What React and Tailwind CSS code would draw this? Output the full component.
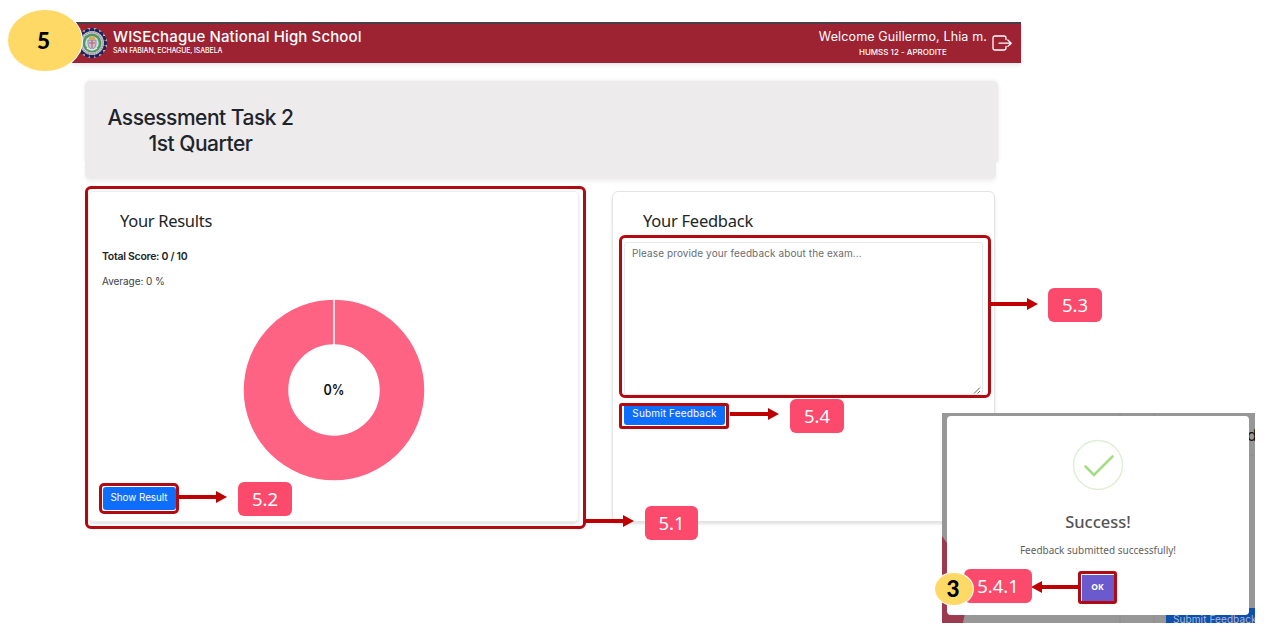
function Seal() {
  const scallops = Array.from({ length: 16 }, (_, i) => (i * Math.PI) / 8);
  return (
    <svg viewBox="0 0 32 32" className="h-8 w-8 shrink-0">
      <circle cx="16" cy="16" r="15" fill="#d9d4e2" />
      {scallops.map((a, i) => (
        <circle key={i} cx={16 + 12.7 * Math.cos(a)} cy={16 + 12.7 * Math.sin(a)} r="2.5" fill="#1d2458" />
      ))}
      <circle cx="16" cy="16" r="12" fill="#c3ccd6" />
      <circle cx="16" cy="16" r="10.8" fill="none" stroke="#b98a94" strokeWidth="1.4" strokeDasharray="1.5 1" />
      <circle cx="16" cy="16" r="9.4" fill="#4f9a63" />
      <circle cx="16" cy="16" r="6.8" fill="#d5dcd8" />
      <path d="M12 13h8v4q0 4-4 5.500-4-1.500-4-5.500z" fill="#cdbfd0" stroke="#6c87ad" strokeWidth=".8" />
      <path d="M16 13v8M13 16h6" stroke="#c0545c" strokeWidth="1" />
      <path d="M13 12.500 13.500 9l2.500 1.500L18.500 9l.5 3.500z" fill="#e3a43b" />
      <path d="M11 21q5 4 10 0" stroke="#eef1ea" strokeWidth="1.300" fill="none" />
    </svg>
  );
}

function LogoutIcon() {
  return (
    <svg viewBox="0 0 22 18" className="h-[18px] w-[22px]" fill="none" stroke="#fff" strokeWidth="1.300" strokeLinecap="round" strokeLinejoin="round">
      <path d="M15 5.500V4q0-2-2-2H4Q2 2 2 4v10q0 2 2 2h9q2 0 2-2v-1.500" />
      <path d="M8 9.200h12M16.800 6l3.400 3.200-3.400 3.200" />
    </svg>
  );
}

function Arrow({ className, length, left = false }) {
  const body = length - 11;
  return (
    <svg className={className} width={length} height="12" viewBox={`0 0 ${length} 12`}>
      <g fill="#bf0000" transform={left ? `translate(${length} 0) scale(-1 1)` : undefined}>
        <rect x="0" y="4" width={body + 1} height="4" />
        <path d={`M${body} 0L${length} 6L${body} 12z`} />
      </g>
    </svg>
  );
}

function Callout({ className, children }) {
  return (
    <div
      className={`absolute flex h-[34px] items-center justify-center rounded-[6px] bg-[#fb4a6c] pt-px font-['Noto_Sans',sans-serif] text-[18.5px] leading-none text-white ${className}`}
    >
      {children}
    </div>
  );
}

function Header() {
  return (
    <header className="ml-[72px] flex h-[41px] w-[949px] items-center border-t-2 border-[#454045] bg-[#9d2232] pl-1 text-white shadow-[0_2px_4px_rgba(0,0,0,0.1)]">
      <div className="mb-[2px]">
        <Seal />
      </div>
      <div className="mb-[2px] ml-[5px] flex flex-col">
        <span className="whitespace-nowrap text-[15px] font-medium leading-[17px] tracking-[0.12px]">WISEchague National High School</span>
        <span className="whitespace-nowrap text-[7px] font-medium leading-[12px] tracking-[-0.12px]">SAN FABIAN, ECHAGUE, ISABELA</span>
      </div>
      <div className="mb-[2px] ml-auto flex flex-col items-center">
        <span className="whitespace-nowrap text-[12.5px] leading-[18px] tracking-[0.14px]">Welcome Guillermo, Lhia m.</span>
        <span className="whitespace-nowrap text-[8px] font-medium leading-[12px]">HUMSS 12 - APRODITE</span>
      </div>
      <div className="mb-[2px] ml-[4px] mr-2">
        <LogoutIcon />
      </div>
    </header>
  );
}

function TitlePanel() {
  return (
    <div className="ml-[85px] mt-[18px] w-[913px]">
      <div className="h-[81px] rounded-t-[5px] bg-[#edebec] pl-[22px] pt-[24px] shadow-[0_0_4px_rgba(0,0,0,0.1)]">
        <h1 className="w-[187px] text-center text-[21px] font-medium leading-[26px] tracking-[-0.5px] text-[#20242a]">
          <span className="whitespace-nowrap">Assessment Task 2</span>
          <br />
          1st Quarter
        </h1>
      </div>
      <div className="relative h-[17px] w-[911px] rounded-b-[5px] bg-[#edebec] shadow-[0_3px_4px_rgba(0,0,0,0.06)]" />
    </div>
  );
}

function Donut() {
  return (
    <svg viewBox="0 0 182 182" className="ml-[140.500px] mt-[10px] h-[182px] w-[182px]">
      <circle cx="91" cy="91" r="68" fill="none" stroke="#ff6384" strokeWidth="44.500" />
      <path d="M91 0v46" stroke="#fff" strokeWidth="1.500" />
      <text x="91" y="96" textAnchor="middle" fontSize="14" fontWeight="600" fill="#111" fontFamily="Inter, sans-serif" textLength="21" lengthAdjust="spacingAndGlyphs">
        0%
      </text>
    </svg>
  );
}

function ResultsCard() {
  return (
    <section className="h-[343px] w-[501px] rounded-[6px] border-[3px] border-[#b10a10] pt-[2px]">
      <div className="h-[331px] w-[491px] rounded-[5px] border border-[#ededed] pl-[13px] shadow-[0_2px_3px_rgba(0,0,0,0.12)]">
        <h2 className="ml-[18px] mt-[16px] font-['Noto_Sans',sans-serif] text-[16.5px] leading-[26px] tracking-[-0.3px] text-[#212529]">Your Results</h2>
        <p className="mt-[15px] text-[10.5px] font-semibold leading-4 tracking-[-0.28px] text-[#212529]">Total Score: 0 / 10</p>
        <p className="mt-[8px] text-[10px] leading-4 tracking-[-0.05px] text-[#3c4045]">Average: 0 %</p>
        <Donut />
        <div className="ml-[-3px] mt-[2px] flex h-[31px] w-20 items-center justify-center rounded-[5px] border-[3px] border-[#b10a10] bg-white">
          <button className="h-[23px] w-[73px] whitespace-nowrap rounded-[3px] bg-[#0d6efd] text-[9.8px] text-white">Show Result</button>
        </div>
      </div>
    </section>
  );
}

function FeedbackCard() {
  return (
    <section className="ml-[26px] mt-[5px] h-[331px] w-[383px] rounded-[6px] border border-[#e3e4e6] pl-[6px] shadow-[0_2px_3px_rgba(0,0,0,0.12)]">
      <h2 className="ml-[24px] mt-[16px] font-['Noto_Sans',sans-serif] text-[16.5px] leading-[26px] tracking-[-0.25px] text-[#212529]">Your Feedback</h2>
      <div className="mt-[1px] h-[163px] w-[372px] rounded-[6px] border-[3px] border-[#b10a10] px-[2px] pt-[4px]">
        <div className="flex h-[153px] w-[359px] justify-between rounded-[3px] border border-[#e6eaed] pl-[7px] pt-[2px]">
          <p className="whitespace-nowrap text-[10px] leading-4 tracking-[0.1px] text-[#6a6d70]">Please provide your feedback about the exam...</p>
          <svg viewBox="0 0 8 8" className="mr-px h-2 w-2 self-end" stroke="#555" strokeWidth=".9">
            <path d="M1 7.500 7 1.500M4.500 7.500 7 5" />
          </svg>
        </div>
      </div>
      <div className="mt-[5px] h-[26px] w-[110px] rounded-[3px] border-[3px] border-[#b10a10] pl-[2px]">
        <button className="flex h-[19px] w-[101px] justify-center whitespace-nowrap rounded-b-[3px] bg-[#0d6efd] text-[10px] leading-[14px] tracking-[0.15px] text-white">Submit Feedback</button>
      </div>
    </section>
  );
}

function SuccessModal() {
  return (
    <div className="absolute left-[942px] top-[413px] h-[210px] w-[313px] overflow-hidden bg-[#979797]">
      <svg className="absolute inset-0" width="313" height="210">
        <path d="M0 123 5 130V199Q14 205 23 200L21 210H0z" fill="#9c3a50" />
        <path d="M178 0v210M212 0v210M300 42h13" stroke="#8d8d8d" strokeWidth="1" />
      </svg>
      <span className="absolute left-[305px] top-[12px] text-[16px] leading-5 text-[#111]">d</span>
      <span className="absolute left-[224px] top-[195px] h-4 w-[90px] whitespace-nowrap bg-[#0f4fae] pl-[7px] pt-[4px] text-[10px] leading-[15px] tracking-[0.1px] text-[#a9bad2]">Submit Feedback</span>
      <div className="absolute left-[5px] top-[3px] flex h-[199px] w-[302px] flex-col items-center rounded-[4px] bg-white pt-[23px] font-['Noto_Sans',sans-serif]">
        <svg viewBox="0 0 52 52" className="h-[52px] w-[52px] shrink-0" fill="none">
          <circle cx="26" cy="26" r="24.500" stroke="#dfefd5" strokeWidth="1.500" />
          <path d="M13.500 27.500 22 36 40.500 17.500" stroke="#a5dc86" strokeWidth="2.600" strokeLinecap="round" />
        </svg>
        <h3 className="mt-[19px] text-[16.5px] font-medium leading-6 text-[#545454]">Success!</h3>
        <p className="mt-[8px] whitespace-nowrap text-[10px] leading-4 text-[#5f5f5f]">Feedback submitted successfully!</p>
        <div className="mr-px mt-[13px] flex h-[33px] w-[39px] items-center justify-center rounded-[3px] border-[3px] border-[#b10a10]">
          <button className="h-[26px] w-8 bg-[#6a5acd] text-[8.5px] font-bold text-white">OK</button>
        </div>
      </div>
    </div>
  );
}

export default function App() {
  return (
    <div className="relative h-[644px] w-[1280px] overflow-hidden bg-white pt-[22px] font-['Inter',sans-serif]">
      <Header />
      <TitlePanel />
      <main className="ml-[85px] mt-[7px] flex items-start">
        <ResultsCard />
        <FeedbackCard />
      </main>

      <SuccessModal />

      <Arrow className="absolute left-[178px] top-[491px]" length={49} />
      <Arrow className="absolute left-[585px] top-[515px]" length={49} />
      <Arrow className="absolute left-[990px] top-[298px]" length={48} />
      <Arrow className="absolute left-[730px] top-[408px]" length={49} />
      <Arrow className="absolute left-[1031px] top-[581px]" length={48} left />

      <Callout className="left-[645px] top-[506px] w-[53px]">5.1</Callout>
      <Callout className="left-[238px] top-[482px] w-[54px]">5.2</Callout>
      <Callout className="left-[1048px] top-[288px] w-[54px]">5.3</Callout>
      <Callout className="left-[790px] top-[399px] w-[54px]">5.4</Callout>
      <Callout className="left-[964px] top-[569px] w-[68px]">5.4.1</Callout>

      <div className="absolute left-[8px] top-[10px] flex h-[61px] w-[74px] items-center justify-center rounded-[50%] bg-[#ffd966] font-['Lato',sans-serif] text-[22.5px] font-black text-black shadow-[0_0_0_1px_#fff]">
        <span className="pr-[3px]">5</span>
      </div>
      <div className="absolute left-[935px] top-[573px] flex h-[32px] w-[38px] items-center justify-center rounded-[50%] bg-[#ffd966] font-['Lato',sans-serif] text-[22.5px] font-black text-black shadow-[0_0_0_1px_#fff]">
        <span className="pb-px pr-[2px]">3</span>
      </div>
    </div>
  );
}
